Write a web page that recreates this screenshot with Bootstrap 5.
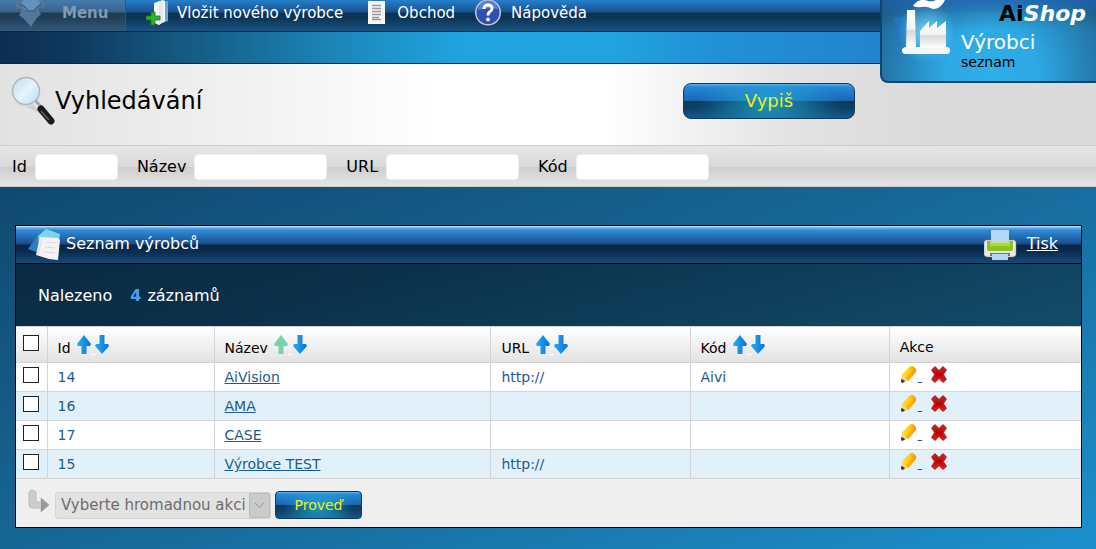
<!DOCTYPE html>
<html lang="cs">
<head>
<meta charset="utf-8">
<meta name="viewport" content="width=device-width, initial-scale=1">
<title>AiShop – Výrobci</title>
<link href="https://cdn.jsdelivr.net/npm/bootstrap@5.3.0/dist/css/bootstrap.min.css" rel="stylesheet">
<style>
body{font-family:"DejaVu Sans",Verdana,sans-serif;font-size:16px;line-height:20px;color:#000;min-height:100vh;
  background:linear-gradient(158deg,#0b3b60 0,#125079 28%,#176a9a 60%,#1c90cc 100%) fixed}
svg{flex:none}
.topbar{height:32px;font-size:15px;border-bottom:1px solid #06294a;background:linear-gradient(#2480cb 0,#1a4f8e 12px,#0a3454 13px,#0b3555 18px,#1b5482 31px)}
.topbar a{color:#fff;text-decoration:none;height:26px}
.topbar .menu-link{height:31px;width:126px;padding-bottom:5px;color:#7e9cb4;font-weight:700;border-right:1px solid #1b5a93;
  background:linear-gradient(#447db0 0,#3a618b 12px,#1e3c55 13px,#213f58 18px,#34587a 31px)}
.menu-link span{margin-left:17px}
.bandbar{height:32px;border-bottom:1px solid #06294a;background:linear-gradient(90deg,#0c2d50 0,#0e3a5f 7%,#13587f 16%,#1c8dc2 33%,#20a3df 42%,#20a3df 56%,#2190d5 66%,#2185cd 80%)}
.brandbox{top:0;right:0;width:216px;height:83px;border:1px solid #0d4570;border-width:0 0 2px 2px;border-bottom-left-radius:8px;color:#fff;
  background:linear-gradient(rgba(30,90,170,.65) 0,rgba(25,70,140,.3) 12px,rgba(0,0,0,.1) 13px,transparent 30px),
  radial-gradient(ellipse 130px 120px at 110px 70px,#2faeea 0,#2da9e5 35%,#1f6391 100%)}
.brandbox .logo{top:2px;right:10px;font-size:22px;line-height:24px;font-weight:700}
.brandbox .titles{top:30px;left:79px}
.brandbox .titles b{font-size:20px;line-height:24px;font-weight:400}
.brandbox .titles span{font-size:14px;line-height:16px;color:#000}
.factory{top:-3px;left:11px}
.searchhead{height:82px;padding:0 241px 8px 11px;border-bottom:1px solid #ccc;background:linear-gradient(90deg,#e2e2e2 0,#eee 18%,#fff 40%,#fff 55%,#e2e2e2 73%,#dadada 85%)}
.searchhead h1{font-size:24px;line-height:30px;font-weight:400}
.glossy{color:#f0ec10;border:1px solid #0d3a5e;
  background:radial-gradient(ellipse 42% 90% at 50% 60%,rgba(32,180,220,.75),transparent),linear-gradient(#5db6ea 0,#2788d9 8%,#1b66b0 49%,#0c3a5e 51%,#0d3f66 70%,#18598a 100%)}
.glossy:hover{color:#fff}
.btn-list{width:172px;height:36px;border-radius:8px;font-size:18px;line-height:20px}
.btn-run{width:87px;height:28px;border-radius:4px;font-size:14px;line-height:18px}
.filterbar{height:41px;padding:2px 12px 0;border-bottom:1px solid #ccc;column-gap:19px;background:linear-gradient(#e6e6e6 0,#dadada 51%,#cecece 53%,#e4e4e4 100%)}
.filterbar input{width:133px;height:26px;border:1px solid #eee;border-radius:4px;background:#fff}
.filterbar .narrow{width:83px}
.panelbox{margin:38px 14px 21px 15px;border:1px solid #000;background:#efefef}
.panelhead{height:38px;color:#fff;padding:0 23px 2px 12px;border-bottom:1px solid #000;
  background:linear-gradient(#eef6ff 0,#8cc0f0 1px,#2f8ddb 4px,#1a4b8b 18px,#082544 19px,#0a2d50 26px,#1a4b78 38px)}
.panelhead h2{font-size:16px;line-height:20px;font-weight:400}
.panelhead a{color:#fff}
.found{height:62px;padding:22px 22px 0;color:#fff;background:linear-gradient(165deg,#0a2a42,#0b3049 30%,#124c69 100%)}
.found b{color:#4f9df0;margin-left:18px;margin-right:6px}
.grid-list{table-layout:fixed;font-size:14px;line-height:20px;color:#1b5c90;border-top:1px solid #d4d4d4}
.grid-list th,.grid-list td{padding:0 10px;border-right:1px solid #d4d4d4;border-bottom:1px solid #d4d4d4;height:29px;font-weight:400}
.grid-list th:last-child,.grid-list td:last-child{border-right:0}
.grid-list thead th{height:36px;padding-top:4px;color:#000}
.grid-list thead{background:linear-gradient(#fff,#e2e2e2)}
.grid-list tbody tr{background:#fff}
.grid-list tbody tr:nth-child(even){background:#e2f0fa}
.grid-list td a{color:#1b5c90}
.grid-list .tick,.grid-list thead .tick{width:31px;padding:0 7px 4px}
.grid-list thead .sortable{padding-top:8px}
.sortable a{color:#fff}
.sortable svg{margin-bottom:8px}
.sortable a:first-of-type svg{margin-left:2px}
.actions svg{margin-bottom:6px}
.actions a+a{margin-left:4px}
.tick input{appearance:none;display:block;width:16px;height:16px;border:1px solid #222;background:#fff;margin:0}
.tick input:checked{background:#1b5c90}
.c-id{width:167px}.c-name{width:26%}.c-url,.c-code{width:18.7%}
.bulk{height:48px;padding:4px 12px 0}
.bulk select{width:216px;height:27px;padding:0 24px 0 5px;font-size:15px;line-height:20px;color:#6d6d6d;opacity:1;border:1px solid #d4d4d4;border-radius:3px;appearance:none;
  background:url("data:image/svg+xml,%3Csvg xmlns='http://www.w3.org/2000/svg' width='21' height='25'%3E%3Cpath fill='%23cacaca' stroke='%23bbb' d='M.5.5h20v24H.5z'/%3E%3Cpath fill='none' stroke='%23999' d='M6 10l4.500 4.500L15 10'/%3E%3C/svg%3E") right center no-repeat #e2e2e2}
</style>
</head>
<body>
<svg width="0" height="0" class="position-absolute" aria-hidden="true">
  <defs>
    <linearGradient id="gBlue"><stop offset="0" stop-color="#22b0f5"/><stop offset="1" stop-color="#0b6fd6"/></linearGradient>
    <linearGradient id="gRed" x2="0" y2="1"><stop offset="0" stop-color="#b33"/><stop offset=".5" stop-color="#c00000"/><stop offset="1" stop-color="#e82020"/></linearGradient>
    <linearGradient id="gPen"><stop offset="0" stop-color="#ffe040"/><stop offset=".55" stop-color="#ffd000"/><stop offset="1" stop-color="#f78a00"/></linearGradient>
    <linearGradient id="gWhite" x2="0" y2="1"><stop offset="0" stop-color="#fff"/><stop offset=".5" stop-color="#f2f2f2"/><stop offset=".55" stop-color="#d8d8d8"/><stop offset="1" stop-color="#fff"/></linearGradient>
    <linearGradient id="gLens" x2="1" y2="1"><stop offset="0" stop-color="#b9dcf3"/><stop offset=".5" stop-color="#e6f4fc"/><stop offset="1" stop-color="#b5dcf5"/></linearGradient>
    <radialGradient id="gGlow"><stop offset="0" stop-color="#7fdcff"/><stop offset="1" stop-color="#5cc4f0" stop-opacity="0"/></radialGradient>
  </defs>
  <symbol id="up" viewBox="0 0 14 19"><path d="M7 0l7 9-1 2H9.500v8h-5v-8H1L0 9z"/></symbol>
  <symbol id="down" viewBox="0 0 14 19"><path d="M7 19l7-8-1-2H9.500V0h-5v9H1l-1 2z"/></symbol>
  <symbol id="pencil" viewBox="0 0 18 20"><path d="M1 19L1.500 10l7 6z" fill="#f6cf9f"/><path d="M1 14.500q-1 4 1 4.500l3-1.800z" fill="#333"/><path d="M1.500 10L10 1.500Q12.500 0 15 2.500 17.500 5 16 7.500L8.500 16.500q-2.500.5-3-2.500-3.500-.500-4-4z" fill="url(#gPen)"/><path d="M5.500 14l8-9 2.500 2.500-7.500 9q-2 0-3-2.500z" fill="#ff9d00" opacity=".6"/></symbol>
  <symbol id="cross" viewBox="0 0 16 17"><path d="M4 1l4 4 4-4 3 3-3 4.500 3 5L12 16l-4-4-4 4-3-2.500 3-5L1 4z" fill="url(#gRed)" stroke="#b22" stroke-width="1.500" stroke-linejoin="round"/></symbol>
</svg>

<header class="position-relative">
  <nav class="topbar d-flex align-items-start">
    <a href="#" class="menu-link d-flex align-items-center">
      <svg class="ms-3" width="29" height="28" viewBox="0 0 29 28"><path d="M0 2l5-2h19l5 2-1 7-4-1-2 3 3 4-5 5-5 8-7-8-5-4 3-4-2-3-4 1z" fill="#54789a"/><path d="M8 0h14l2 4-3 6-6 3-7-3-3-5z" fill="#6592bc"/><path d="M4 5l5 3 3 4h6l3-4 5-3" fill="none" stroke="#3c6186" stroke-width="1.500"/></svg>
      <span>Menu</span>
    </a>
    <a href="#" class="d-flex align-items-center ps-3 ms-1">
      <svg class="me-2" width="23" height="26" viewBox="0 0 23 26"><path d="M17 2l5-1v20l-5 2z" fill="#6ba5df"/><path d="M8 3l9-3 2 1v20l-6 4-5-2z" fill="#f5f8fa"/><path d="M13 2l4-2v22l-4 3z" fill="#e2e8eb"/><path d="M5 12h4v4h5v4H9v5H5v-5H0v-4h5z" fill="#2fae2f" stroke="#167a1a" stroke-width=".8"/></svg>
      Vložit nového výrobce
    </a>
    <a href="#" class="d-flex align-items-center ps-4">
      <svg width="30" height="26" viewBox="0 0 30 26"><path d="M1 1h17v23H1z" fill="#f6f6f4"/><path d="M5 5.500h9M5 8.500h9M5 11.500h9M5 14.500h9M5 17.500h7M5 19.500h9" stroke="#999" stroke-width="1.500"/></svg>
      Obchod
    </a>
    <a href="#" class="d-flex align-items-center ps-3 ms-1">
      <svg width="36" height="26" viewBox="0 0 36 26"><circle cx="13" cy="12.500" r="12.300" fill="#2e4fb3" stroke="#c9ccd8" stroke-width="1.500"/><path d="M3 10a10 9 0 0 1 20-1q-10-2-20 1z" fill="#5f80d2"/><path d="M9 9q0-4 4-4t4 3.500q0 2-2.500 3.500Q13 13 13 15.500" fill="none" stroke="#fff" stroke-width="3"/><circle cx="13" cy="19.500" r="1.900" fill="#fff"/></svg>
      Nápověda
    </a>
  </nav>
  <div class="bandbar"></div>
  <div class="brandbox position-absolute overflow-hidden">
    <svg class="factory position-absolute" width="60" height="66" viewBox="0 0 60 66"><path d="M8 20l4-2v32l-7-2 1-5-5-3 2-5-3-4 4-4-3-5 5-3z" fill="#1f78bd"/><circle cx="34" cy="36" r="30" fill="url(#gGlow)"/><path d="M12 50h43l2 2v3l-2 2H11l-2-2v-3z" fill="#f6f6f6"/><path d="M14 13h8l1 38H13z" fill="url(#gWhite)"/><path d="M27 51V34l9-10v7l8-7v7l9-7v27z" fill="url(#gWhite)"/><path d="M20 9q4-7 12-6 8 3 12-1l8 1q-4 9-12 9-7-3-11-2-5 1-9-1z" fill="#fff"/></svg>
    <div class="logo position-absolute"><span class="text-black">Ai</span><em>Shop</em></div>
    <div class="titles position-absolute d-flex flex-column"><b>Výrobci</b><span>seznam</span></div>
  </div>
</header>

<main>
  <form>
    <div class="searchhead d-flex align-items-center">
      <svg width="44" height="50" viewBox="0 0 44 50"><path d="M4 26q8 8 18 2l10 12-8-5z" fill="#bbb" opacity=".5"/><path d="M24 24l7 8" stroke="#aaa" stroke-width="3"/><circle cx="15" cy="15" r="13.500" fill="url(#gLens)" stroke="#b5b5b5" stroke-width="1.500"/><path d="M30 33l10 12" stroke="#1a1a1a" stroke-width="7" stroke-linecap="round"/><path d="M30 35l8 9" stroke="#666" stroke-width="1.500"/></svg>
      <h1 class="mb-0">Vyhledávání</h1>
      <button type="button" class="btn glossy btn-list p-0 ms-auto">Vypiš</button>
    </div>
    <div class="filterbar d-flex align-items-center">
      <div class="d-flex align-items-center gap-2"><label for="fId">Id</label><input id="fId" class="narrow" type="text"></div>
      <div class="d-flex align-items-center gap-2"><label for="fName">Název</label><input id="fName" type="text"></div>
      <div class="d-flex align-items-center gap-2"><label for="fUrl">URL</label><input id="fUrl" type="text"></div>
      <div class="d-flex align-items-center gap-2"><label for="fCode">Kód</label><input id="fCode" type="text"></div>
    </div>
  </form>

  <section class="panelbox">
    <div class="panelhead d-flex align-items-center">
      <svg width="38" height="34" viewBox="0 0 38 34"><path d="M0 22L12 5l10 5-8 17z" fill="#2f7dbd"/><path d="M10 9l8-7 14 5-1 8-20 4z" fill="#7fd3e8"/><path d="M12 10l18 1 2 2-2 20-9-1-13-4z" fill="#f3f3f5"/><path d="M14 11l-4 17M18 15l10 1M17 20l10 1M16 25l11 1" stroke="#e6d4d8"/></svg>
      <h2 class="mb-0">Seznam výrobců</h2>
      <a href="#" class="ms-auto d-flex align-items-center">
        <svg width="43" height="32" viewBox="0 0 43 32"><path d="M0 15q0-3 3-3h26q3 0 3 3v11q0 3-4 3H4q-4 0-4-3z" fill="#e9e9e6" stroke="#888" stroke-width=".5"/><path d="M7 2h18v12H7z" fill="#b5d7f7"/><path d="M3 13h4v2h18v-2h4v8q0 2-3 2H6q-3 0-3-2z" fill="#8dc21f"/><path d="M6 14h20v4H6z" fill="#b9e04f" opacity=".7"/><path d="M6 25h20v3H6z" fill="#777"/><path d="M8 26h16v6H8z" fill="#b5d7f7"/></svg><span>Tisk</span></a>
    </div>
    <div class="found">Nalezeno<b>4</b>záznamů</div>
    <table class="grid-list w-100">
      <thead>
        <tr>
          <th class="tick"><input type="checkbox" aria-label="Vybrat vše"></th>
          <th class="c-id sortable">Id <a href="#"><svg width="14" height="19" fill="url(#gBlue)"><use href="#up"/></svg>&nbsp;</a><a href="#"><svg width="14" height="19" fill="url(#gBlue)"><use href="#down"/></svg></a></th>
          <th class="c-name sortable">Název <a href="#"><svg width="14" height="19" fill="#75d3a8"><use href="#up"/></svg>&nbsp;</a><a href="#"><svg width="14" height="19" fill="url(#gBlue)"><use href="#down"/></svg></a></th>
          <th class="c-url sortable">URL <a href="#"><svg width="14" height="19" fill="url(#gBlue)"><use href="#up"/></svg>&nbsp;</a><a href="#"><svg width="14" height="19" fill="url(#gBlue)"><use href="#down"/></svg></a></th>
          <th class="c-code sortable">Kód <a href="#"><svg width="14" height="19" fill="url(#gBlue)"><use href="#up"/></svg>&nbsp;</a><a href="#"><svg width="14" height="19" fill="url(#gBlue)"><use href="#down"/></svg></a></th>
          <th>Akce</th>
        </tr>
      </thead>
      <tbody>
        <tr><td class="tick"><input type="checkbox" aria-label="14"></td><td>14</td><td><a href="#">AiVision</a></td><td>http://</td><td>Aivi</td>
          <td class="actions"><a href="#" aria-label="Upravit"><svg width="18" height="19"><use href="#pencil"/></svg>&nbsp;</a> <a href="#" aria-label="Smazat"><svg width="16" height="17"><use href="#cross"/></svg></a></td></tr>
        <tr><td class="tick"><input type="checkbox" aria-label="16"></td><td>16</td><td><a href="#">AMA</a></td><td></td><td></td>
          <td class="actions"><a href="#" aria-label="Upravit"><svg width="18" height="19"><use href="#pencil"/></svg>&nbsp;</a> <a href="#" aria-label="Smazat"><svg width="16" height="17"><use href="#cross"/></svg></a></td></tr>
        <tr><td class="tick"><input type="checkbox" aria-label="17"></td><td>17</td><td><a href="#">CASE</a></td><td></td><td></td>
          <td class="actions"><a href="#" aria-label="Upravit"><svg width="18" height="19"><use href="#pencil"/></svg>&nbsp;</a> <a href="#" aria-label="Smazat"><svg width="16" height="17"><use href="#cross"/></svg></a></td></tr>
        <tr><td class="tick"><input type="checkbox" aria-label="15"></td><td>15</td><td><a href="#">Výrobce TEST</a></td><td>http://</td><td></td>
          <td class="actions"><a href="#" aria-label="Upravit"><svg width="18" height="19"><use href="#pencil"/></svg>&nbsp;</a> <a href="#" aria-label="Smazat"><svg width="16" height="17"><use href="#cross"/></svg></a></td></tr>
      </tbody>
    </table>
    <div class="bulk d-flex align-items-center">
      <svg class="mb-2" width="27" height="25" viewBox="0 0 27 25"><path d="M1 3q3-4 7 0v10h5V9l8 7-8 7v-4H4q-3 0-3-4z" fill="#ccc" stroke="#bbb"/><path d="M13 9l8 7-8 7z" fill="#999"/></svg>
      <select disabled aria-label="Hromadná akce"><option>Vyberte hromadnou akci</option></select>
      <button type="button" class="btn glossy btn-run p-0 ms-1">Proveď</button>
    </div>
  </section>
</main>
<script src="https://cdn.jsdelivr.net/npm/bootstrap@5.3.0/dist/js/bootstrap.bundle.min.js"></script>
</body>
</html>
